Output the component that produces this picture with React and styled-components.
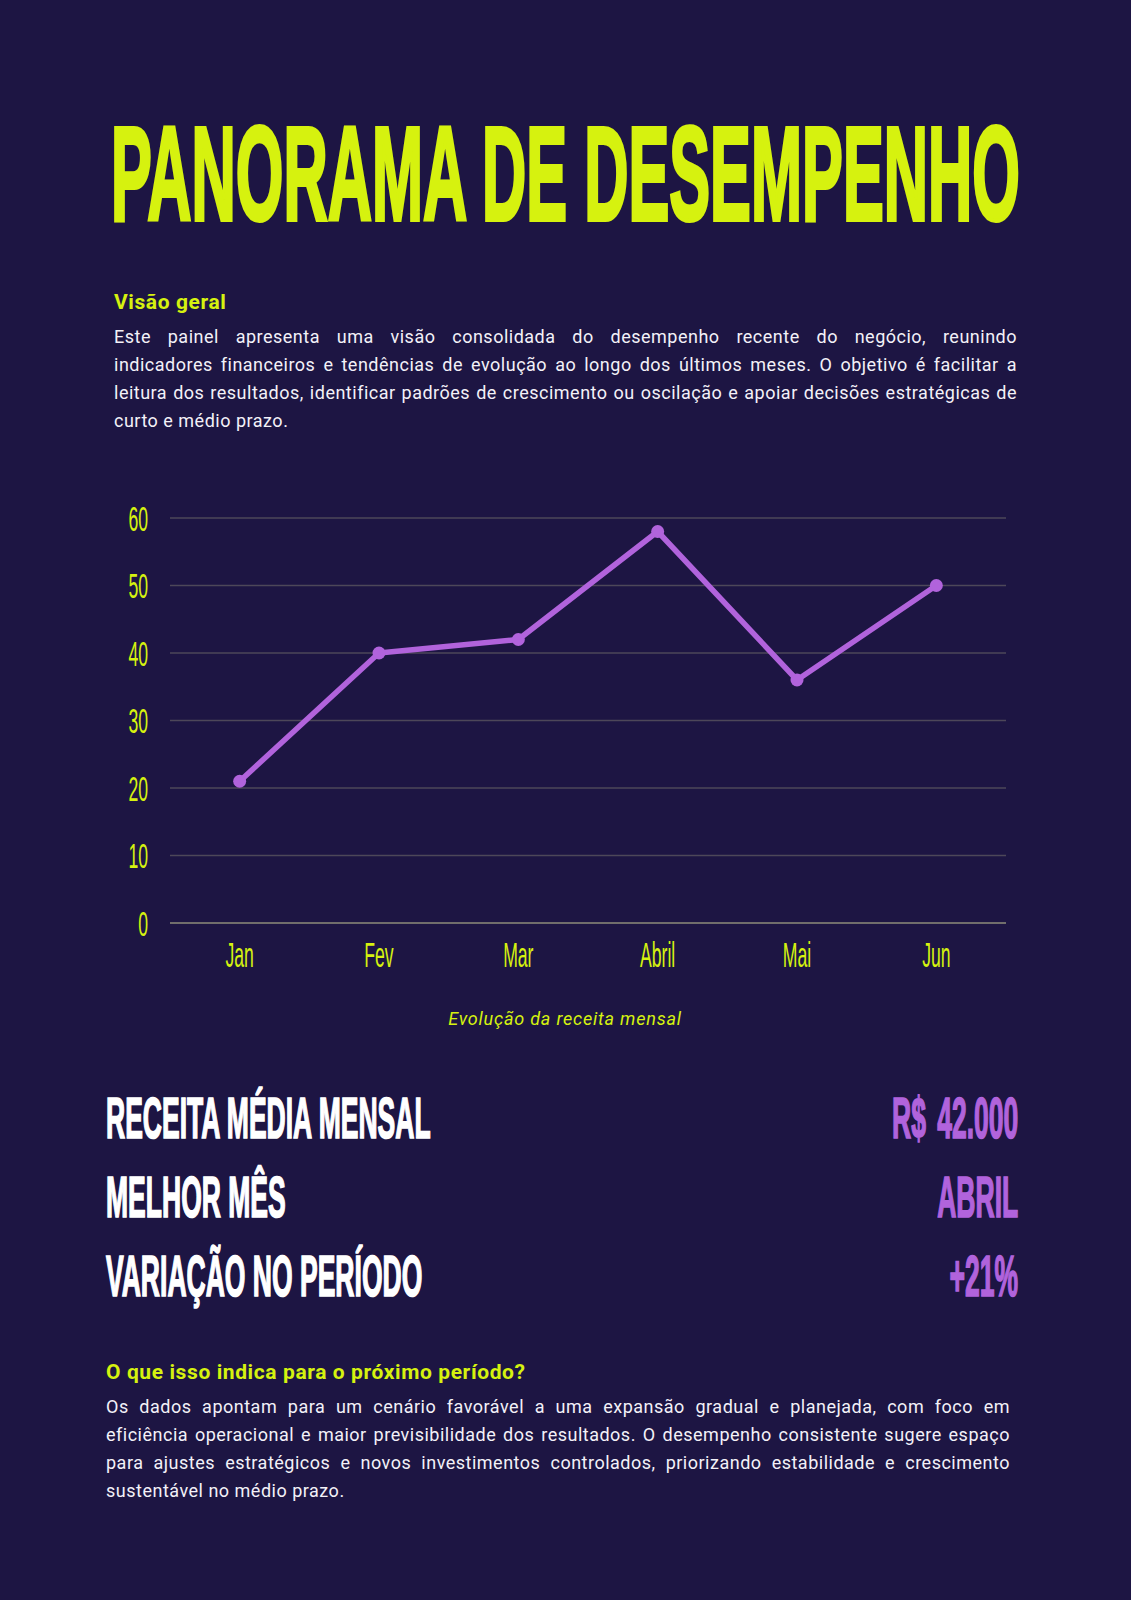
import React, { useLayoutEffect, useRef, useState } from "react";
import styled, { createGlobalStyle } from "styled-components";

const YELLOW = "#d6f20f";
const PURPLE = "#b163dc";
const BG = "#1d1543";
const TEXT = "#f3f1f8";
const CONDENSED = `"Liberation Sans Narrow", "Liberation Sans", Arial, sans-serif`;

// width the title has to fill, the squeeze factor is taken from it
const TITLE_WIDTH = 909;

const GlobalStyle = createGlobalStyle`
  html, body {
    margin: 0;
    background: ${BG};
  }
  * {
    box-sizing: border-box;
  }
`;

const Page = styled.main`
  width: 1131px;
  min-height: 1600px;
  padding: 104px 113px 0 106px;
  background: ${BG};
  color: ${TEXT};
  font-family: Roboto, "Open Sans", sans-serif;
  overflow: hidden;
`;

const Title = styled.h1`
  margin: 0 0 0 5px;
  font-family: ${CONDENSED};
  font-weight: 700;
  font-size: 134px;
  line-height: 140px;
  color: ${YELLOW};
  white-space: nowrap;
  -webkit-text-stroke: 0.03em currentColor;
`;

const Squeeze = styled.span`
  display: inline-block;
  transform-origin: ${(p) => (p.$right ? "right" : "left")} center;
`;

const Intro = styled.section`
  margin: 44px 1px 0 8px;
`;

const Outlook = styled.section`
  margin: 43px 8px 0 0;
`;

const Heading = styled.h2`
  margin: 0;
  font-size: 21px;
  font-weight: 700;
  line-height: 28px;
  letter-spacing: 0.6px;
  color: ${YELLOW};
`;

const Paragraph = styled.p`
  margin: 7px 0 0;
  font-size: 18px;
  line-height: 28px;
  letter-spacing: 0.5px;
`;

const Line = styled.span`
  display: block;
  text-align: ${(p) => (p.$last ? "left" : "justify")};
  text-align-last: ${(p) => (p.$last ? "left" : "justify")};
`;

const ChartBox = styled.figure`
  margin: 55px 0 0;
`;

const ChartSvg = styled.svg`
  display: block;
`;

const Caption = styled.figcaption`
  margin-top: 28px;
  padding-left: 6px;
  text-align: center;
  font-size: 18px;
  font-style: italic;
  line-height: 22px;
  letter-spacing: 0.8px;
  color: ${YELLOW};
`;

const Stats = styled.section`
  margin-top: 48px;
`;

const StatRow = styled.div`
  display: flex;
  justify-content: space-between;
  font-family: ${CONDENSED};
  font-weight: 700;
  font-size: 58px;
  line-height: 79px;
  white-space: nowrap;
  -webkit-text-stroke: 0.03em currentColor;
`;

const StatLabel = styled(Squeeze)`
  flex: 1 1 0;
  min-width: 0;
  color: #ffffff;
`;

const StatValue = styled(Squeeze)`
  flex: none;
  color: ${PURPLE};
  word-spacing: 0.15em;
`;

const intro = [
  "Este painel apresenta uma visão consolidada do desempenho recente do negócio, reunindo",
  "indicadores financeiros e tendências de evolução ao longo dos últimos meses. O objetivo é facilitar a",
  "leitura dos resultados, identificar padrões de crescimento ou oscilação e apoiar decisões estratégicas de",
  "curto e médio prazo.",
];

const outlook = [
  "Os dados apontam para um cenário favorável a uma expansão gradual e planejada, com foco em",
  "eficiência operacional e maior previsibilidade dos resultados. O desempenho consistente sugere espaço",
  "para ajustes estratégicos e novos investimentos controlados, priorizando estabilidade e crescimento",
  "sustentável no médio prazo.",
];

const stats = [
  { label: "RECEITA MÉDIA MENSAL", value: "R$ 42.000" },
  { label: "MELHOR MÊS", value: "ABRIL" },
  { label: "VARIAÇÃO NO PERÍODO", value: "+21%" },
];

const months = ["Jan", "Fev", "Mar", "Abril", "Mai", "Jun"];
const revenue = [21, 40, 42, 58, 36, 50];

// chart geometry
const W = 912;
const H = 490;
const X0 = 64;
const X1 = 900;
const BASE = 433;
const UNIT = 6.75;
const COL = (X1 - X0) / months.length;
const px = (i) => X0 + COL * (i + 0.5);
const py = (v) => BASE - v * UNIT;

function Lines({ lines }) {
  return lines.map((text, i) => (
    <Line key={i} $last={i === lines.length - 1}>
      {text}
    </Line>
  ));
}

function RevenueChart({ squeeze }) {
  const ticks = [0, 10, 20, 30, 40, 50, 60];
  const points = revenue.map((v, i) => `${px(i)},${py(v)}`).join(" ");
  const labelStyle = {
    fontFamily: CONDENSED,
    fontSize: 35,
    fill: YELLOW,
  };

  return (
    <ChartSvg width={W} height={H} viewBox={`0 0 ${W} ${H}`}>
      {ticks.map((t) => (
        <g key={t}>
          <line
            x1={X0}
            x2={X1}
            y1={py(t)}
            y2={py(t)}
            stroke={t === 0 ? "#8e8c7a" : "#4d4759"}
            strokeWidth="1.5"
          />
          <text
            transform={`translate(42 ${py(t) + 12.5}) scale(${squeeze} 1)`}
            textAnchor="end"
            style={labelStyle}
          >
            {t}
          </text>
        </g>
      ))}
      {months.map((m, i) => (
        <text
          key={m}
          transform={`translate(${px(i)} 477) scale(${squeeze} 1)`}
          textAnchor="middle"
          style={labelStyle}
        >
          {m}
        </text>
      ))}
      <polyline
        points={points}
        fill="none"
        stroke={PURPLE}
        strokeWidth="5.5"
        strokeLinejoin="round"
        strokeLinecap="round"
      />
      {revenue.map((v, i) => (
        <circle key={i} cx={px(i)} cy={py(v)} r="6.5" fill={PURPLE} />
      ))}
    </ChartSvg>
  );
}

export default function App() {
  const titleRef = useRef(null);
  const [k, setK] = useState(0.53);

  useLayoutEffect(() => {
    const fit = () => {
      const w = titleRef.current && titleRef.current.offsetWidth;
      if (w) setK(TITLE_WIDTH / w);
    };
    fit();
    if (document.fonts) document.fonts.ready.then(fit);
  }, []);

  const squeeze = { transform: `scaleX(${k})` };

  return (
    <Page>
      <GlobalStyle />
      <Title>
        <Squeeze ref={titleRef} style={squeeze}>
          PANORAMA DE DESEMPENHO
        </Squeeze>
      </Title>

      <Intro>
        <Heading>Visão geral</Heading>
        <Paragraph>
          <Lines lines={intro} />
        </Paragraph>
      </Intro>

      <ChartBox>
        <RevenueChart squeeze={k * 1.1} />
        <Caption>Evolução da receita mensal</Caption>
      </ChartBox>

      <Stats>
        {stats.map((s) => (
          <StatRow key={s.label}>
            <StatLabel style={squeeze}>{s.label}</StatLabel>
            <StatValue $right style={squeeze}>
              {s.value}
            </StatValue>
          </StatRow>
        ))}
      </Stats>

      <Outlook>
        <Heading>O que isso indica para o próximo período?</Heading>
        <Paragraph>
          <Lines lines={outlook} />
        </Paragraph>
      </Outlook>
    </Page>
  );
}
